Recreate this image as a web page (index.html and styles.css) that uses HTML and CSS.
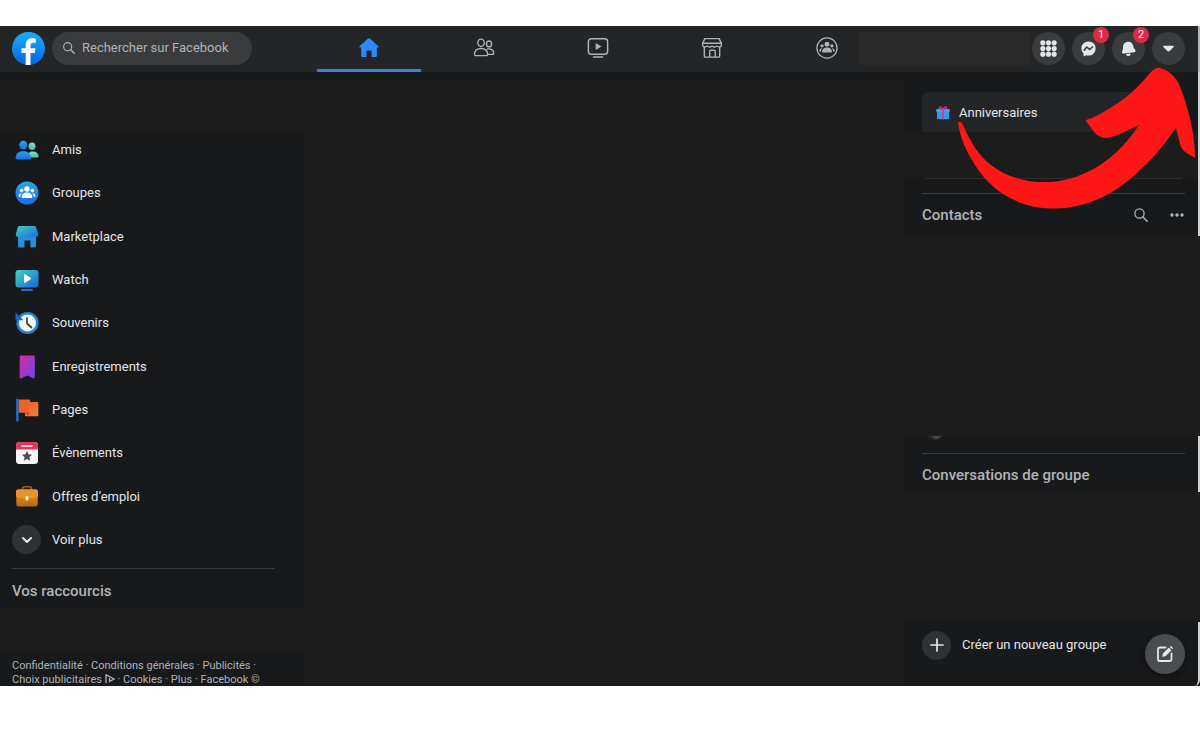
FILE: index.html
```html
<!DOCTYPE html>
<html lang="fr">
<head>
<meta charset="utf-8">
<meta name="viewport" content="width=device-width, initial-scale=1">
<title>Facebook</title>
<link rel="stylesheet" href="styles.css">
</head>
<body>
<svg class="defs" width="0" height="0" aria-hidden="true">
  <defs>
    <linearGradient id="logo" x1="0" y1="0" x2="0" y2="1"><stop offset="0" stop-color="#19aeff"/><stop offset="1" stop-color="#0364e0"/></linearGradient>
    <linearGradient id="blue" x1="0" y1="0" x2="0" y2="1"><stop offset="0" stop-color="#27a7ea"/><stop offset="1" stop-color="#1c6be8"/></linearGradient>
    <linearGradient id="teal" x1="0" y1="0" x2="1" y2="1"><stop offset="0" stop-color="#45d0b8"/><stop offset="1" stop-color="#1769e0"/></linearGradient>
    <linearGradient id="green" x1="0" y1="0" x2="0" y2="1"><stop offset="0" stop-color="#8adfc4"/><stop offset="1" stop-color="#46bfa6"/></linearGradient>
    <linearGradient id="violet" x1="0" y1="0" x2="1" y2="1"><stop offset="0" stop-color="#d52ea0"/><stop offset="1" stop-color="#6d42ee"/></linearGradient>
    <linearGradient id="orange" x1="0" y1="0" x2="0" y2="1"><stop offset="0" stop-color="#f0a030"/><stop offset="1" stop-color="#b96512"/></linearGradient>
    <linearGradient id="flag" x1="0" y1="0" x2="1" y2="1"><stop offset="0" stop-color="#ee5a24"/><stop offset="1" stop-color="#f58138"/></linearGradient>
    <symbol id="crowd" viewBox="0 0 24 24">
      <circle cx="12" cy="8" r="2.7"/><circle cx="6.6" cy="9.6" r="1.8"/><circle cx="17.4" cy="9.6" r="1.8"/>
      <path d="M7.4 17c-.5 0-.8-.4-.8-.9.1-2.8 1.8-4.7 5.400-4.700s5.300 1.900 5.400 4.700c0 .5-.3.9-.8.9zM4.200 15.800c-.6 0-.8-.4-.7-.9.4-1.800 1.500-2.800 3.200-2.600-.9 1-1.300 2.200-1.400 3.500zM19.800 15.800c.6 0 .8-.4.7-.9-.4-1.800-1.500-2.800-3.200-2.600.9 1 1.300 2.200 1.400 3.500z"/>
    </symbol>
    <symbol id="search" viewBox="0 0 16 16"><circle cx="6.500" cy="6.500" r="4.600" fill="none" stroke="currentColor" stroke-width="1.300"/><path d="M10 10l4.200 4.200" stroke="currentColor" stroke-width="1.500" stroke-linecap="round"/></symbol>
  </defs>
</svg>

<div class="app">
  <header class="topbar">
    <div class="brand">
      <a class="logo" href="#" aria-label="Facebook">
        <svg viewBox="0 0 33 33"><circle cx="16.500" cy="16.500" r="16.500" fill="url(#logo)"/><path fill="#fff" d="M13.700 33V20.900H9.500v-4.700h4.200v-2.700c0-4.700 2.300-7.200 6.500-7.200 1.700 0 3.200.3 3.600.4v4h-2.400c-2.200 0-2.900 1.100-2.900 2.800v2.700h5l-.9 4.700h-4.100V33c-1.500.1-3.400.1-4.800 0z"/></svg>
      </a>
      <label class="search">
        <svg class="search-icon"><use href="#search"/></svg>
        <input type="text" placeholder="Rechercher sur Facebook" aria-label="Rechercher sur Facebook">
      </label>
    </div>
    <nav class="tabs" aria-label="Navigation principale">
      <a class="tab active" href="#" aria-label="Accueil"><svg viewBox="0 0 24 24"><path fill="#2e89ff" d="M12 1.500c.5 0 .9.200 1.300.5l9 8.100c.6.600.3 1.400-.5 1.400H20.500v9.200c0 .6-.4 1.100-1 1.100H14.800v-6c0-.7-.4-1.100-1-1.100h-3.600c-.6 0-1 .4-1 1.100v6H4.500c-.6 0-1-.5-1-1.100v-9.200H2.200c-.8 0-1.100-.8-.5-1.400l9-8.100c.4-.3.800-.5 1.300-.5z"/></svg></a>
      <a class="tab" href="#" aria-label="Amis"><svg viewBox="0 0 24 24" fill="none" stroke="#b0b3b8" stroke-width="1.500"><ellipse cx="8.800" cy="6.300" rx="3.500" ry="4"/><path d="M3.200 20.300c-1 0-1.700-.7-1.600-1.700.3-3.700 2.500-6 7.200-6s6.900 2.300 7.200 6c.1 1-.6 1.700-1.600 1.700z"/><ellipse cx="17.500" cy="7.500" rx="2.800" ry="3.200"/><path d="M15.200 13.200c4.400-1 7 1.300 7.400 4.300.1.800-.5 1.400-1.300 1.400H16"/></svg></a>
      <a class="tab" href="#" aria-label="Watch"><svg viewBox="0 0 24 24" fill="none" stroke="#b0b3b8" stroke-width="1.600"><rect x="1.500" y="1.800" width="21" height="17" rx="3.200"/><path d="M9.500 6.500v7.700l6.300-3.850z" fill="#b0b3b8" stroke="none"/><path d="M7 21.900h10" stroke-linecap="round"/></svg></a>
      <a class="tab" href="#" aria-label="Marketplace"><svg viewBox="0 0 24 24" fill="none" stroke="#b0b3b8" stroke-width="1.500" stroke-linejoin="round"><path d="M4.200 1.800h15.600l2.400 5v2c0 1.300-1 2.100-2.300 2.100-1.200 0-1.800-.9-2.600-.9s-1.400.9-2.600.9S13 10 12 10s-1.500.9-2.700.9S7.500 10 6.700 10s-1.400.9-2.600.9c-1.300 0-2.300-.8-2.300-2.100v-2zM2 6.800h20M3.600 11v9.700c0 .8.500 1.300 1.300 1.300h14.200c.8 0 1.300-.5 1.300-1.300V11M9.500 22v-6.500c0-.7.400-1.100 1.100-1.100h3.800c.7 0 1.100.4 1.100 1.100V22"/></svg></a>
      <a class="tab" href="#" aria-label="Groupes"><svg viewBox="0 0 24 24" fill="#b0b3b8"><circle cx="12" cy="12" r="11" fill="none" stroke="#b0b3b8" stroke-width="1.400"/><use href="#crowd"/></svg></a>
    </nav>
    <div class="account">
      <div class="account-blank"></div>
      <button class="round" aria-label="Menu"><svg viewBox="0 0 18 18" fill="#e4e6eb"><circle cx="3" cy="3" r="2.700"/><circle cx="9" cy="3" r="2.700"/><circle cx="15" cy="3" r="2.700"/><circle cx="3" cy="9" r="2.700"/><circle cx="9" cy="9" r="2.700"/><circle cx="15" cy="9" r="2.700"/><circle cx="3" cy="15" r="2.700"/><circle cx="9" cy="15" r="2.700"/><circle cx="15" cy="15" r="2.700"/></svg></button>
      <button class="round" aria-label="Messenger"><svg viewBox="0 0 18 18"><path fill="#e4e6eb" d="M9 1.700c-4.300 0-7.500 3.100-7.500 7.200 0 2.200.9 4 2.300 5.300v2.400c0 .5.400.7.800.5l2-.9c.8.200 1.600.3 2.400.3 4.300 0 7.500-3.300 7.500-7.600S13.300 1.700 9 1.700z"/><path d="M4.600 10.900l2.600-3.500 3 2.600 3.200-2.800" fill="none" stroke="#3a3b3c" stroke-width="1.600" stroke-linejoin="round" stroke-linecap="round"/></svg><span class="badge">1</span></button>
      <button class="round" aria-label="Notifications"><svg viewBox="0 0 18 18" fill="#e4e6eb"><path d="M8.300 1.800c3-.4 5.200 1.500 5.700 4.300.4 2 .8 2.700 2 4.200 1 1.200.3 2.500-1 2.700L4 14.300c-1.600.2-2.400-1.200-1.700-2.500.9-1.600.9-2.500.8-4.500 0-3 2-5.100 5.200-5.500z"/><path d="M6.300 14.800l4.800-.6c.2 1.500-.6 2.600-1.900 2.800-1.400.2-2.600-.7-2.900-2.200z"/></svg><span class="badge">2</span></button>
      <button class="round" aria-label="Compte"><svg viewBox="0 0 18 18"><path fill="#e4e6eb" d="M4.200 6h9.600c.8 0 1.100.8.600 1.400l-4.500 4.500c-.5.500-1.300.5-1.800 0L3.600 7.400C3.100 6.800 3.400 6 4.200 6z"/></svg></button>
    </div>
  </header>

  <div class="columns">
    <aside class="left">
      <div class="blank blank-profile"></div>
      <nav class="menu" aria-label="Raccourcis">
        <a href="#"><span class="icon"><svg viewBox="0 0 26 24"><ellipse cx="18.500" cy="8" rx="3.700" ry="4.100" fill="url(#green)"/><path d="M14 20.200c0-4.600 1.500-6.700 5-6.700 4 0 6.200 2 6.500 5.200.1.900-.5 1.500-1.400 1.500z" fill="url(#green)"/><ellipse cx="9" cy="6.700" rx="4.400" ry="4.800" fill="url(#blue)"/><path d="M2.200 22.200c-1 0-1.600-.7-1.600-1.600.3-4.500 3-7.300 8.400-7.300s8.100 2.800 8.400 7.300c0 .9-.6 1.600-1.600 1.600z" fill="url(#blue)"/></svg></span>Amis</a>
        <a href="#"><span class="icon"><svg viewBox="0 0 24 24"><circle cx="12" cy="12" r="11.500" fill="url(#blue)"/><use href="#crowd" fill="#fff"/></svg></span>Groupes</a>
        <a href="#"><span class="icon"><svg viewBox="0 0 24 24"><path d="M3 9h18v12c0 1-.6 1.600-1.500 1.600H15.500V15.500h-6v7.100H4.500c-.9 0-1.500-.6-1.500-1.600z" fill="#258fda"/><path d="M4.500 1h15c.8 0 1.300.3 1.500 1l2.200 6.600c.5 2-.3 3.500-2.300 3.500-1 0-1.700-.4-2.200-.9-.7.600-1.300.9-2.300.9s-1.600-.4-2.200-.9c-.7.600-1.200.9-2.200.9s-1.600-.4-2.200-.9c-.7.600-1.200.9-2.200.9s-1.600-.4-2.200-.9c-.6.500-1.300.9-2.300.9-1.900 0-2.700-1.500-2.200-3.500L3 2c.2-.7.700-1 1.500-1z" fill="url(#teal)"/></svg></span>Marketplace</a>
        <a href="#"><span class="icon"><svg viewBox="0 0 24 24"><rect x=".5" y="2" width="23" height="17.500" rx="3" fill="url(#teal)"/><path d="M9 6.800v7.600c0 .5.500.7.900.5l6-3.800c.4-.3.400-.7 0-1l-6-3.800c-.4-.2-.9 0-.9.500z" fill="#fff"/><path d="M7 22h10" stroke="#1c72cf" stroke-width="1.800" stroke-linecap="round"/></svg></span>Watch</a>
        <a href="#"><span class="icon"><svg viewBox="0 0 24 24"><circle cx="12.500" cy="12" r="9.800" fill="#f3f6fb" stroke="#2583d6" stroke-width="2.600"/><path d="M.5 1.500v7.700h8z" fill="#1767cc"/><path d="M12 7v5.500l4.500 4" fill="none" stroke="#3d4048" stroke-width="1.700" stroke-linecap="round"/></svg></span>Souvenirs</a>
        <a href="#"><span class="icon"><svg viewBox="0 0 24 24"><path d="M6.200.5h12c1 0 1.600.6 1.600 1.600v20.500c0 .9-.8 1.200-1.500.8l-6-3-6 3c-.8.400-1.600.1-1.600-.8V2.100C4.700 1.100 5.200.5 6.200.5z" fill="url(#violet)"/></svg></span>Enregistrements</a>
        <a href="#"><span class="icon"><svg viewBox="0 0 24 24"><path d="M3.500 1.500H15v13.300H3.500z" fill="#ed6228"/><path d="M13.500 4h8.800c.6 0 1 .4 1 1v12.300c0 .6-.4 1-1 1H11c-.8 0-1-.4-1-1v-2.500l3.500-1z" fill="url(#flag)"/><path d="M10 14.800h3.500v2.500z" fill="#b94013"/><rect x="1.200" y=".5" width="2.300" height="23" rx="1" fill="#1b74d8"/></svg></span>Pages</a>
        <a href="#"><span class="icon"><svg viewBox="0 0 24 24"><rect x="1" y="1" width="22" height="22" rx="3.500" fill="#f5f6f8"/><path d="M1 8.500v-4C1 2.500 2.500 1 4.500 1h15C21.500 1 23 2.500 23 4.500v4z" fill="#e2365a"/><path d="M7 5h10" stroke="#fff" stroke-width="1.500" stroke-linecap="round"/><path d="M12 10l1.500 3.300 3.600.4-2.700 2.400.8 3.600-3.200-1.800-3.200 1.800.8-3.600-2.700-2.400 3.600-.4z" fill="#4b4d52"/></svg></span>Évènements</a>
        <a href="#"><span class="icon"><svg viewBox="0 0 24 24"><path d="M7.500 5.500V4c0-1.400.8-2.200 2.200-2.200h4.600c1.400 0 2.200.8 2.200 2.200v1.500" fill="none" stroke="#a65c12" stroke-width="1.600"/><rect x="1.300" y="4.500" width="21.400" height="17" rx="2.500" fill="url(#orange)"/><path d="M1 6.500c0-1.200.9-2 2-2h18c1.100 0 2 .8 2 2v5.300c-7 2.600-15 2.600-22 0z" fill="#e9942a"/><rect x="10.600" y="11" width="2.800" height="4.400" rx="1.200" fill="#fff0d0"/></svg></span>Offres d’emploi</a>
        <a href="#"><span class="icon icon-round"><svg viewBox="0 0 16 16"><path d="M4 6l4 4 4-4" fill="none" stroke="#e4e6eb" stroke-width="2" stroke-linecap="round" stroke-linejoin="round"/></svg></span>Voir plus</a>
      </nav>
      <section class="shortcuts"><h2>Vos raccourcis</h2></section>
      <div class="blank blank-shortcuts"></div>
      <footer class="legal">
        <a href="#">Confidentialité</a> · <a href="#">Conditions générales</a> · <a href="#">Publicités</a> ·<br>
        <a href="#">Choix publicitaires <svg class="adchoice" viewBox="0 0 10 10"><path d="M1 9.200V.8L9.200 5 4.500 7.400V4" fill="none" stroke="currentColor" stroke-width="1.300"/></svg></a> · <a href="#">Cookies</a> · <a href="#">Plus</a> · Facebook ©
      </footer>
    </aside>

    <main class="feed"></main>

    <aside class="right">
      <section class="panel birthdays">
        <a class="birthday-card" href="#"><svg viewBox="0 0 14 14"><path d="M1 5.500h12V12c0 .8-.4 1.200-1.200 1.200H2.200c-.8 0-1.200-.4-1.200-1.200z" fill="#3597ed"/><rect x=".3" y="3" width="13.400" height="3.300" rx=".6" fill="#459ff2"/><path d="M6.200 3h1.600v10.200H6.200z" fill="#cf3b84"/><path d="M7 3.300C4.500 3.500 3 2.400 3.300 1.300 3.800.2 6 .8 7 3.300 8 .8 10.200.2 10.700 1.300 11 2.400 9.500 3.500 7 3.300z" fill="none" stroke="#d93b7d" stroke-width="1.100"/></svg>Anniversaires</a>
      </section>
      <div class="blank blank-birthdays"></div>
      <section class="panel contacts">
        <div class="panel-title"><h2>Contacts</h2>
          <button class="plain" aria-label="Rechercher"><svg><use href="#search"/></svg></button>
          <button class="plain" aria-label="Options"><svg viewBox="0 0 16 16" fill="currentColor"><circle cx="3" cy="8" r="1.700"/><circle cx="8" cy="8" r="1.700"/><circle cx="13" cy="8" r="1.700"/></svg></button>
        </div>
      </section>
      <div class="blank blank-contacts"></div>
      <section class="panel groups">
        <svg class="avatar-edge" viewBox="0 0 16 4"><path d="M0 0h16c-3 5-11 5-16 0z" fill="#2b2a29"/><path d="M5 0h9l-3 2.500c-2 1-4 0-6-2.500z" fill="#4b4642"/></svg>
        <div class="panel-title"><h2>Conversations de groupe</h2></div>
      </section>
      <div class="blank blank-groups"></div>
      <section class="panel create">
        <a class="create-link" href="#"><span class="icon icon-round"><svg viewBox="0 0 16 16"><path d="M8 2v12M2 8h12" stroke="#e4e6eb" stroke-width="1.700" stroke-linecap="round"/></svg></span>Créer un nouveau groupe</a>
        <button class="compose" aria-label="Nouveau message"><svg viewBox="0 0 18 18" fill="none" stroke="#e4e6eb" stroke-width="1.800"><path d="M9.500 2.500H4c-1.200 0-2 .8-2 2V14c0 1.200.8 2 2 2h9.500c1.200 0 2-.8 2-2V8.500" stroke-linecap="round"/><path d="M7 11l.6-2.300 5.200-5.200 1.700 1.700-5.200 5.200zM14.700 1.700l1.600 1.600" fill="#e4e6eb" stroke-width="1.400" stroke-linejoin="round" stroke-linecap="round"/></svg></button>
      </section>
    </aside>
  </div>

  <svg class="arrow" viewBox="955 65 245 150" aria-hidden="true"><path fill="#ff1616" d="M958 123C959 121 961 121 963 125C970 142 980 157 991 165C1008 178 1028 183 1050 182C1085 180 1118 158 1139 125C1128 130 1118 136 1107 138C1096 139 1092 128 1086 121C1086 119 1090 119 1094 117C1115 107 1135 92 1150 73C1154 69 1157 67 1160 68C1168 70 1175 76 1179 84C1188 107 1195 132 1195 158C1189 154 1182 152 1180 144L1176 128C1165 143 1154 158 1140 170C1117 193 1088 208 1055 208.500C1012 209 985 184 972 160C964 147 960 135 958 123Z"/></svg>
</div>
</body>
</html>
```
FILE: styles.css
```css
* { box-sizing: border-box; }

body {
  margin: 0;
  padding: 26px 0 64px;
  background: #fff;
  color: #e4e6eb;
  font: 400 13px/16px Roboto, "Liberation Sans", sans-serif;
}

a { color: inherit; text-decoration: none; }
button { border: 0; padding: 0; color: inherit; font: inherit; cursor: pointer; }
svg { display: block; }
h2 { margin: 0; color: #b0b3b8; font-size: 15px; line-height: 18px; font-weight: 500; }
.defs { position: absolute; }

.app { position: relative; }

/* Top bar */
.topbar {
  display: grid;
  grid-template-columns: 317px minmax(0, 1fr) 319px;
  height: 46px;
  background: #242526;
  border-right: 2px solid #b4b5b6;
}
.brand { display: flex; align-items: center; gap: 7px; padding: 0 0 2px 12px; }
.logo, .logo svg { width: 33px; height: 33px; }
.search {
  display: flex;
  align-items: center;
  gap: 6px;
  width: 200px;
  height: 33px;
  padding: 0 10px;
  border-radius: 17px;
  background: #3a3b3c;
  color: #b0b3b8;
}
.search-icon { flex: none; width: 14px; height: 14px; }
.search input {
  flex: 1;
  min-width: 0;
  border: 0;
  padding: 0;
  outline: 0;
  background: none;
  color: #e4e6eb;
  font: inherit;
}
.search input::placeholder { color: #b0b3b8; opacity: 1; }

.tabs { display: grid; grid-template-columns: repeat(5, 1fr); column-gap: 10px; }
.tab {
  display: flex;
  align-items: center;
  justify-content: center;
  border-bottom: 3px solid transparent;
}
.tab.active { border-color: #3b82e0; }
.tab svg { width: 22px; height: 22px; }

.account { display: flex; align-items: center; gap: 7px; padding: 0 13px 2px 0; }
.account-blank { flex: 1; height: 33px; margin: 0 -6px 0 -20px; background: #2a2a2a; }
.round {
  position: relative;
  display: grid;
  place-items: center;
  flex: none;
  width: 33px;
  height: 33px;
  border-radius: 50%;
  background: #3a3b3c;
}
.round svg { width: 17px; height: 17px; }
.badge {
  position: absolute;
  top: -5px;
  right: -4px;
  width: 16px;
  height: 16px;
  border-radius: 8px;
  background: #e02847;
  color: #fff;
  font-size: 11px;
  line-height: 16px;
  text-align: center;
}

/* Columns */
.columns { display: grid; grid-template-columns: 305px minmax(0, 1fr) 297px; background: #1c1c1c; }
.feed { border-top: 8px solid #18191a; }
.left { display: flex; flex-direction: column; background: #18191a; }
.blank { background: #1c1c1c; }
.blank-profile { height: 60px; border-top: 8px solid #18191a; }
.blank-shortcuts { height: 45px; }

.menu {
  display: flex;
  flex-direction: column;
  justify-content: space-between;
  min-height: 423px;
  padding: 3px 12px 0;
}
.menu a { display: flex; align-items: center; gap: 11px; height: 30px; }
.icon { display: grid; place-items: center; flex: none; width: 29px; height: 29px; }
.icon svg { width: 24px; height: 24px; }
.icon-round { border-radius: 50%; background: #303132; }
.icon-round svg { width: 16px; height: 16px; }

.shortcuts { margin: 13px 30px 0 12px; padding: 13px 0 8px; border-top: 1px solid #3a3b3c; }
.legal {
  padding: 6px 12px 0;
  height: 33px;
  color: #b0b3b8;
  font-size: 11px;
  line-height: 14px;
  white-space: nowrap;
}
.adchoice { display: inline-block; width: 10px; height: 10px; vertical-align: -1px; }

/* Right column */
.right { display: flex; flex-direction: column; }
.panel { padding: 0 13px 0 19px; background: #18191a; border-right: 2px solid #d0d1d2; }
.birthdays { padding-top: 20px; }
.birthday-card {
  display: flex;
  align-items: center;
  gap: 9px;
  height: 40px;
  padding: 2px 14px 0;
  border-radius: 6px 6px 0 0;
  background: #242526;
}
.birthday-card svg { width: 14px; height: 14px; }
.blank-birthdays { height: 46px; border-right: 2px solid #d0d1d2; }
.blank-contacts { height: 200px; }
.blank-groups { height: 130px; }
.contacts::before { content: ""; display: block; height: 1px; margin: 0 3px 14px; background: #2c2d2e; }
.panel-title { display: flex; align-items: center; height: 43px; border-top: 1px solid #3a3b3c; color: #b0b3b8; }
.panel-title h2 { flex: 1; }
.plain { background: none; }
.plain svg { width: 16px; height: 16px; }
.contacts .panel-title { gap: 20px; }
.avatar-edge { width: 16px; height: 4px; margin: 0 5px 13px; }
.groups .panel-title { height: 39px; padding-top: 4px; }
.create { position: relative; height: 64px; padding-top: 8px; border-bottom-right-radius: 6px; }
.create-link { display: flex; align-items: center; gap: 11px; height: 30px; }
.compose {
  position: absolute;
  right: 13px;
  bottom: 12px;
  display: grid;
  place-items: center;
  width: 40px;
  height: 40px;
  border-radius: 50%;
  background: #4b4c4f;
  box-shadow: 0 2px 6px #0006;
}
.compose svg { width: 18px; height: 18px; }

/* Annotation arrow drawn over the page */
.arrow { position: absolute; top: 39px; right: 0; width: 245px; height: 150px; pointer-events: none; }
```
